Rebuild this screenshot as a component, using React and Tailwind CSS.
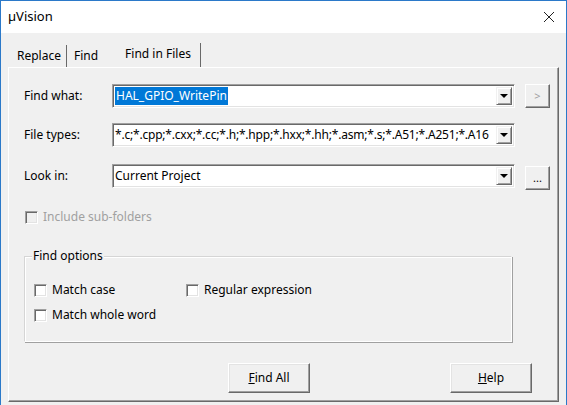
import React from "react";

const font = { fontFamily: '"Noto Sans", "Open Sans", Arial, sans-serif' };

function Combo({ children, selected, tight }) {
  return (
    <div className="relative flex h-[24px] w-[403px] items-center border border-t-[#a0a0a0] border-l-[#a0a0a0] border-b-white border-r-white bg-white shadow-[inset_1px_1px_0_#696969,inset_-1px_-1px_0_#e3e3e3]">
      <div className={`flex-1 overflow-hidden whitespace-nowrap pl-[2px] pr-[2px] ${tight ? "tracking-[-0.2px]" : ""}`}>
        {selected ? (
          <span className="bg-[#0078d7] px-[1px] py-[1px] text-white">{children}</span>
        ) : (
          <span className="text-black">{children}</span>
        )}
      </div>
      <div className="mr-[2px] flex h-[18px] w-[16px] shrink-0 items-center justify-center border border-t-[#f0f0f0] border-l-[#f0f0f0] border-b-[#696969] border-r-[#696969] bg-[#f0f0f0] shadow-[inset_1px_1px_0_#fff,inset_-1px_-1px_0_#a0a0a0]">
        <div className="h-0 w-0 border-x-[4px] border-t-[4px] border-x-transparent border-t-black" />
      </div>
    </div>
  );
}

function SmallBtn({ children, disabled }) {
  return (
    <div
      className={`flex h-[24px] w-[25px] items-center justify-center border border-t-white border-l-white border-b-[#696969] border-r-[#696969] bg-[#f0f0f0] text-[11px] shadow-[inset_-1px_-1px_0_#a0a0a0] ${
        disabled ? "text-[#a0a0a0]" : "text-black"
      }`}
    >
      {children}
    </div>
  );
}

function Check({ label, disabled }) {
  return (
    <div className="flex items-center gap-[5px]">
      <div
        className={`h-[13px] w-[13px] border border-t-[#a0a0a0] border-l-[#a0a0a0] border-b-white border-r-white shadow-[inset_1px_1px_0_#696969,inset_-1px_-1px_0_#e3e3e3] ${
          disabled ? "bg-[#f0f0f0]" : "bg-white"
        }`}
      />
      <span className={disabled ? "text-[#a0a0a0]" : "text-black"}>{label}</span>
    </div>
  );
}

function Button({ children }) {
  return (
    <div className="flex h-[30px] w-[82px] items-center justify-center border border-t-white border-l-white border-b-[#696969] border-r-[#696969] bg-[#f0f0f0] shadow-[inset_-1px_-1px_0_#a0a0a0,inset_1px_1px_0_#e3e3e3]">
      {children}
    </div>
  );
}

export default function App() {
  return (
    <div
      className="flex h-[405px] w-[567px] flex-col overflow-hidden border-x border-t border-[#2b79c9] bg-[#f0f0f0] text-[12px] text-black"
      style={font}
    >
      {/* Title bar */}
      <div className="flex h-[32px] shrink-0 items-center justify-between bg-white pl-[7px] pr-[8px]">
        <span className="text-[13px]">µVision</span>
        <svg width="12" height="12" viewBox="0 0 12 12" className="mr-[3px]">
          <path d="M1 1 L11 11 M11 1 L1 11" stroke="#222" strokeWidth="1" />
        </svg>
      </div>

      <div className="flex flex-1 flex-col px-[7px]">
        {/* Tabs */}
        <div className="flex h-[34px] items-end pl-[3px]">
          <div className="flex h-[22px] items-center border-r border-r-[#696969] pl-[6px] pr-[5px]">Replace</div>
          <div className="flex h-[22px] items-center pl-[7px] pr-[16px]">Find</div>
          <div className="-mb-[1px] flex h-[25px] items-start border-r border-r-[#696969] bg-[#f0f0f0] pl-[11px] pr-[9px] pt-[2px]">
            Find in Files
          </div>
        </div>

        {/* Panel */}
        <div className="flex h-[335px] flex-col border border-t-white border-l-white border-b-[#696969] border-r-[#696969] pl-[15px] shadow-[inset_-1px_-1px_0_#a0a0a0]">
          <div className="mt-[16px] flex items-center">
            <span className="w-[88px]">Find what:</span>
            <Combo selected>HAL_GPIO_WritePin</Combo>
            <div className="ml-[10px]">
              <SmallBtn disabled>&gt;</SmallBtn>
            </div>
          </div>
          <div className="mt-[15px] flex items-center">
            <span className="w-[88px]">File types:</span>
            <Combo tight>*.c;*.cpp;*.cxx;*.cc;*.h;*.hpp;*.hxx;*.hh;*.asm;*.s;*.A51;*.A251;*.A16</Combo>
          </div>
          <div className="mt-[15px] flex items-center">
            <span className="w-[88px]">Look in:</span>
            <Combo>Current Project</Combo>
            <div className="ml-[10px] mt-[4px]">
              <SmallBtn>...</SmallBtn>
            </div>
          </div>

          <div className="mt-[18px] pl-[1px]">
            <Check label="Include sub-folders" disabled />
          </div>

          {/* Group box */}
          <div className="relative mt-[30px] h-[86px] w-[488px] border border-t-[#d5d5d5] border-l-[#d5d5d5] border-b-white border-r-white shadow-[inset_1px_1px_0_#fff,1px_1px_0_#a0a0a0]">
            <span className="absolute -top-[10px] left-[7px] bg-[#f0f0f0] px-[1px] leading-[18px]">Find options</span>
            <div className="grid grid-cols-[152px_1fr] gap-y-[7px] pl-[9px] pt-[24px]">
              <Check label="Match case" />
              <Check label="Regular expression" />
              <Check label="Match whole word" />
            </div>
          </div>

          <div className="mt-[21px] flex">
            <div className="ml-[204px]">
              <Button>
                <span>
                  <span className="underline">F</span>ind All
                </span>
              </Button>
            </div>
            <div className="ml-[140px]">
              <Button>
                <span>
                  <span className="underline">H</span>elp
                </span>
              </Button>
            </div>
          </div>
        </div>
      </div>
    </div>
  );
}
